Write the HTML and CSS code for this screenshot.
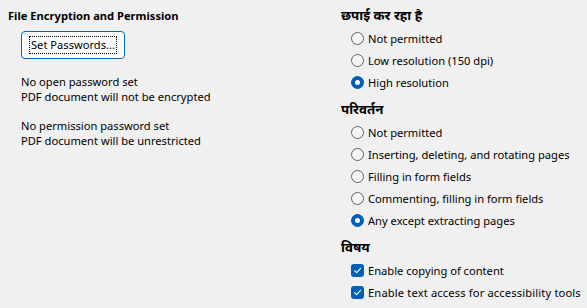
FILE: index.html
```html
<!DOCTYPE html>
<html lang="en">
<head>
<meta charset="utf-8">
<title>File Encryption and Permission</title>
<link rel="stylesheet" href="styles.css">
</head>
<body>
<div class="page">
  <div class="left">
    <div class="heading">File Encryption and Permission</div>
    <button class="btn" type="button"><span class="focus">Set Passwords...</span></button>
    <div class="note">
      <div>No open password set</div>
      <div>PDF document will not be encrypted</div>
    </div>
    <div class="note note-second">
      <div>No permission password set</div>
      <div>PDF document will be unrestricted</div>
    </div>
  </div>
  <div class="right">
    <div class="group">
      <div class="group-title" lang="hi">छपाई कर रहा है</div>
      <div class="opt"><span class="radio"></span><span>Not permitted</span></div>
      <div class="opt"><span class="radio"></span><span>Low resolution (150 dpi)</span></div>
      <div class="opt"><span class="radio checked"></span><span>High resolution</span></div>
    </div>
    <div class="group">
      <div class="group-title" lang="hi">परिवर्तन</div>
      <div class="opt"><span class="radio"></span><span>Not permitted</span></div>
      <div class="opt"><span class="radio"></span><span>Inserting, deleting, and rotating pages</span></div>
      <div class="opt"><span class="radio"></span><span>Filling in form fields</span></div>
      <div class="opt"><span class="radio"></span><span>Commenting, filling in form fields</span></div>
      <div class="opt"><span class="radio checked"></span><span>Any except extracting pages</span></div>
    </div>
    <div class="group">
      <div class="group-title" lang="hi">विषय</div>
      <div class="opt"><span class="check"><svg viewBox="0 0 13 13" width="13" height="13"><polyline points="3.6,6.7 5.6,8.7 9.6,4.4" fill="none" stroke="#fff" stroke-width="1.1" stroke-linecap="round" stroke-linejoin="round"/></svg></span><span>Enable copying of content</span></div>
      <div class="opt"><span class="check"><svg viewBox="0 0 13 13" width="13" height="13"><polyline points="3.6,6.7 5.6,8.7 9.6,4.4" fill="none" stroke="#fff" stroke-width="1.1" stroke-linecap="round" stroke-linejoin="round"/></svg></span><span class="label-wide">Enable text access for accessibility tools</span></div>
    </div>
  </div>
</div>
</body>
</html>
```

FILE: styles.css
```css
html, body {
  margin: 0;
  padding: 0;
}

body {
  background: #f0f0f0;
  color: #000;
  font-family: "Noto Sans", "Noto Sans Devanagari", "Lohit Devanagari", "FreeSans", sans-serif;
  font-size: 11.15px;
  width: 587px;
  height: 308px;
  overflow: hidden;
}

.page {
  display: grid;
  grid-template-columns: 333px 1fr;
  height: 308px;
}

.left {
  padding: 8px 0 0 8px;
  display: flex;
  flex-direction: column;
  align-items: flex-start;
}

.heading {
  font-weight: bold;
  line-height: 16px;
}

.btn {
  margin: 7px 0 0 13px;
  width: 104px;
  height: 28px;
  box-sizing: border-box;
  border: 1px solid #0067c0;
  border-radius: 4px;
  background: #fdfdfd;
  display: flex;
  align-items: center;
  justify-content: center;
  padding: 0;
  font: inherit;
  color: #000;
}

.focus {
  outline: 1px dotted #000;
  outline-offset: 0;
  padding: 0 1px;
  line-height: 16px;
}

.note {
  margin: 15px 0 0 13px;
  line-height: 15px;
}

.note-second {
  margin-top: 14px;
}

.right {
  padding: 7px 0 0 8px;
  display: flex;
  flex-direction: column;
}

.group + .group {
  margin-top: 8px;
}

.group-title {
  font-family: "Noto Sans Devanagari", "Lohit Devanagari", "FreeSans", "Noto Sans", sans-serif;
  font-weight: bold;
  font-size: 13.3px;
  line-height: 20px;
  height: 20px;
  white-space: nowrap;
}

.opt {
  height: 22px;
  display: flex;
  align-items: center;
  gap: 4px;
  padding-left: 10px;
  white-space: nowrap;
}

.label-wide {
  letter-spacing: 0.15px;
}

.radio {
  width: 13px;
  height: 13px;
  box-sizing: border-box;
  border: 1px solid #616161;
  border-radius: 50%;
  background: #f5f5f5;
  flex: none;
  position: relative;
}

.radio.checked {
  border-color: #005fb8;
  background: #005fb8;
}

.radio.checked::after {
  content: "";
  position: absolute;
  left: 3px;
  top: 3px;
  width: 5px;
  height: 5px;
  border-radius: 50%;
  background: #fff;
}

.check {
  width: 13px;
  height: 13px;
  border-radius: 3px;
  background: #005fb8;
  flex: none;
  display: block;
}

.check svg {
  display: block;
}
```
